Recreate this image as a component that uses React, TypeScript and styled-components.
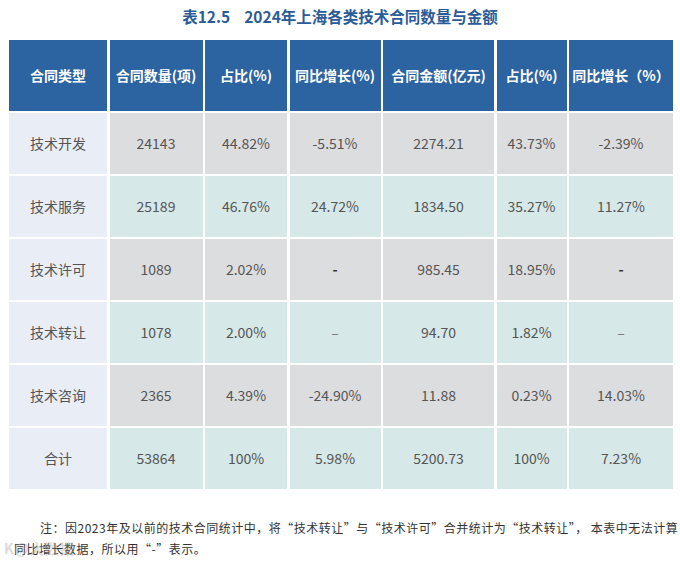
import React from "react";
import styled, { createGlobalStyle } from "styled-components";

const Global = createGlobalStyle`
  html, body { margin: 0; padding: 0; background: #ffffff; }
  body { font-family: "Noto Sans CJK SC", "Noto Sans", sans-serif; }
`;

const Page = styled.div`
  position: relative;
  width: 680px;
  height: 561px;
  overflow: hidden;
  background: #ffffff;
`;

const Title = styled.h1`
  margin: 0;
  height: 40px;
  display: flex;
  align-items: center;
  justify-content: center;
  padding-bottom: 8px;
  box-sizing: border-box;
  font-size: 15.5px;
  font-weight: 700;
  color: #2b5c98;
  white-space: pre;
`;

const Table = styled.div`
  display: grid;
  grid-template-columns: 98px 93px 82px 91px 111px 70px 104px;
  grid-template-rows: 70.5px;
  grid-auto-rows: 60.5px;
  gap: 2.5px;
  margin-left: 9px;
  width: 663px;
`;

const HeadCell = styled.div`
  background: #2c63a1;
  color: #ffffff;
  font-size: 14px;
  font-weight: 700;
  display: flex;
  align-items: center;
  justify-content: center;
  white-space: nowrap;
`;

type Tone = "first" | "gray" | "teal";

const tones: Record<Tone, string> = {
  first: "#e8edf6",
  gray: "#dcdddf",
  teal: "#d6e8e8",
};

const Cell = styled.div<{ $tone: Tone; $dash?: "bold" | "thin" }>`
  background: ${(p) => tones[p.$tone]};
  color: ${(p) => (p.$dash === "bold" ? "#333" : p.$dash === "thin" ? "#777" : "#555")};
  font-size: 14px;
  font-weight: ${(p) => (p.$dash === "bold" ? 700 : 400)};
  display: flex;
  align-items: center;
  justify-content: center;
  white-space: nowrap;
`;

const Note = styled.p`
  margin: 28px 0 0 14px;
  font-size: 12px;
  line-height: 21px;
  color: #333;
  text-indent: 26px;
  letter-spacing: 0.5px;
  white-space: nowrap;
`;

const Watermark = styled.div`
  position: absolute;
  left: 4px;
  top: 538px;
  font-size: 14px;
  font-weight: 700;
  color: rgba(160, 160, 160, 0.4);
  letter-spacing: 1px;
  pointer-events: none;
`;

const headers = [
  "合同类型",
  "合同数量(项)",
  "占比(%)",
  "同比增长(%)",
  "合同金额(亿元)",
  "占比(%)",
  "同比增长（%）",
];

const rows: string[][] = [
  ["技术开发", "24143", "44.82%", "-5.51%", "2274.21", "43.73%", "-2.39%"],
  ["技术服务", "25189", "46.76%", "24.72%", "1834.50", "35.27%", "11.27%"],
  ["技术许可", "1089", "2.02%", "B-", "985.45", "18.95%", "B-"],
  ["技术转让", "1078", "2.00%", "T–", "94.70", "1.82%", "T–"],
  ["技术咨询", "2365", "4.39%", "-24.90%", "11.88", "0.23%", "14.03%"],
  ["合计", "53864", "100%", "5.98%", "5200.73", "100%", "7.23%"],
];

export default function App() {
  return (
    <Page>
      <Global />
      <Title>{"表12.5    2024年上海各类技术合同数量与金额"}</Title>
      <Table>
        {headers.map((h, i) => (
          <HeadCell key={`h${i}`}>{h}</HeadCell>
        ))}
        {rows.map((r, ri) =>
          r.map((v, ci) => {
            const tone: Tone = ci === 0 ? "first" : ri % 2 === 0 ? "gray" : "teal";
            let dash: "bold" | "thin" | undefined;
            let text = v;
            if (v.startsWith("B-")) {
              dash = "bold";
              text = "-";
            } else if (v.startsWith("T–")) {
              dash = "thin";
              text = "–";
            }
            return (
              <Cell key={`${ri}-${ci}`} $tone={tone} $dash={dash}>
                {text}
              </Cell>
            );
          })
        )}
      </Table>
      <Note>
        注：因2023年及以前的技术合同统计中，将“技术转让”与“技术许可”合并统计为“技术转让”， 本表中无法计算
        <br />
        同比增长数据，所以用“-”表示。
      </Note>
      <Watermark>K@大数据</Watermark>
    </Page>
  );
}
